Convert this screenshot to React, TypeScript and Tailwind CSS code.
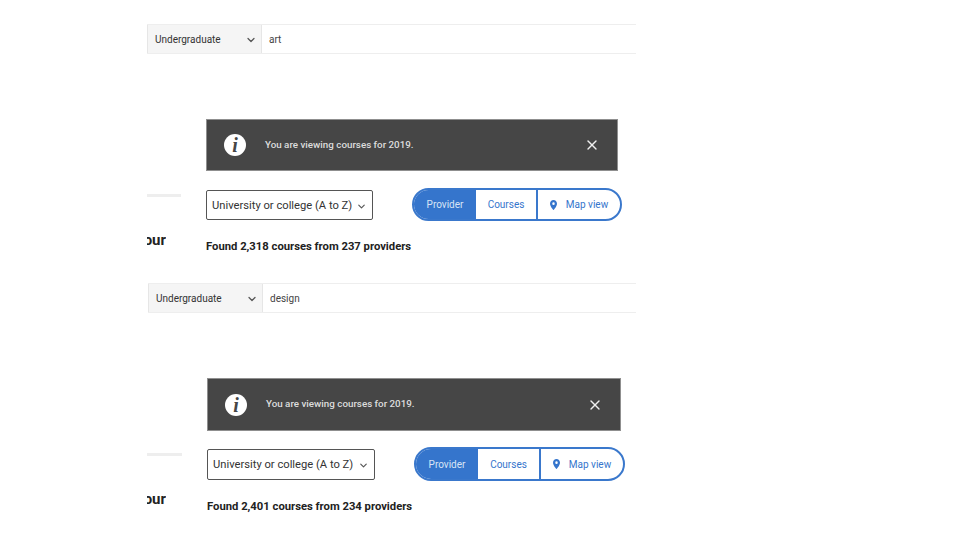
import { ChevronDown, X } from "lucide-react";

type BlockProps = {
  query: string;
  found: string;
  barClass: string;
  selectClass: string;
  noticeClass: string;
  lowerClass: string;
  sideClass: string;
  sortClass: string;
  toggleClass: string;
  providerClass: string;
  coursesClass: string;
  foundClass: string;
  gapClass: string;
};

function Pin() {
  return (
    <svg width="7" height="10" viewBox="0 0 9 12" preserveAspectRatio="none" className="mr-[9px] shrink-0">
      <path
        fillRule="evenodd"
        d="M4.5 0C2 0 0 1.9 0 4.4 0 7.5 4.5 12 4.5 12S9 7.5 9 4.4C9 1.900 7 0 4.500 0Zm0 6A1.600 1.600 0 1 1 4.500 2.800 1.600 1.600 0 0 1 4.500 6Z"
        fill="#3575cc"
      />
    </svg>
  );
}

function Block(p: BlockProps) {
  return (
    <section className="flex flex-col font-['Roboto',sans-serif]">
      <div className={`flex border-y border-[#eeeeee] ${p.barClass}`}>
        <div className={`flex items-center justify-between bg-[#f5f5f5] border-l border-r border-[#e6e6e6] pl-[7px] pr-[4px] pt-[1px] text-[10px] text-[#333333] ${p.selectClass}`}>
          <span>Undergraduate</span>
          <ChevronDown size={12} strokeWidth={2.5} color="#555555" />
        </div>
        <div className="flex items-center pl-[7px] pt-[1px] text-[10px] text-[#444444]">{p.query}</div>
      </div>

      <div className={`flex items-center justify-between bg-[#464646] border border-[#8f8f8f] ${p.noticeClass}`}>
        <div className="flex items-center">
          <span className="flex h-[22px] w-[22px] items-center justify-center rounded-full bg-white font-['Liberation_Serif',serif] text-[20px] font-bold italic text-[#464646]">
            i
          </span>
          <span className="ml-[19px] text-[9.8px] font-medium text-[#dddddd]">You are viewing courses for 2019.</span>
        </div>
        <X size={16} strokeWidth={2} color="#f0f0f0" />
      </div>

      <div className={`flex ${p.lowerClass}`}>
        <div className={`flex shrink-0 flex-col items-start ${p.sideClass}`}>
          <div className="h-[3px] w-full bg-[#eeeeee]" />
          <div className="mt-[36px] flex h-[14px] w-[19px] items-center justify-end overflow-hidden">
            <span className="text-[15px] font-bold leading-none text-[#222222]">Your</span>
          </div>
        </div>
        <div className="flex flex-col">
          <div className={`flex items-center justify-between ${p.gapClass}`}>
            <div className={`flex items-center justify-between whitespace-nowrap rounded-[2px] border border-[#555555] pl-[5px] pr-[5px] pt-[3px] text-[11.2px] text-[#333333] ${p.sortClass}`}>
              <span>University or college (A to Z)</span>
              <ChevronDown size={11} strokeWidth={2.5} color="#555555" />
            </div>
            <div className={`flex overflow-hidden rounded-full border-2 border-[#3a78cc] text-[10px] text-[#3575cc] ${p.toggleClass}`}>
              <span className={`flex items-center justify-center bg-[#3575cc] text-[#d8e4f5] ${p.providerClass}`}>Provider</span>
              <span className={`flex items-center justify-center border-r-2 border-[#3a78cc] ${p.coursesClass}`}>Courses</span>
              <span className="flex flex-1 items-center justify-center">
                <Pin />
                Map view
              </span>
            </div>
          </div>
          <div className={`text-[11.25px] font-bold text-[#222222] ${p.foundClass}`}>{p.found}</div>
        </div>
      </div>
    </section>
  );
}

export default function App() {
  return (
    <main className="flex h-[540px] w-[960px] flex-col overflow-hidden bg-white pl-[147px]">
      <Block
        query="art"
        found="Found 2,318 courses from 237 providers"
        barClass="mt-[24px] h-[30px] w-[489px]"
        selectClass="w-[115px]"
        noticeClass="mt-[65px] ml-[59px] h-[52px] w-[412px] pl-[17px] pr-[17px]"
        lowerClass="mt-[17px]"
        sideClass="w-[59px] pt-[6px] pr-[25px]"
        sortClass="h-[30px] w-[167px]"
        toggleClass="h-[33px] w-[210px]"
        providerClass="w-[62px]"
        coursesClass="w-[62px]"
        foundClass="mt-[19px] leading-[14px]"
        gapClass="w-[416px]"
      />
      <Block
        query="design"
        found="Found 2,401 courses from 234 providers"
        barClass="mt-[29px] ml-[1px] h-[30px] w-[488px]"
        selectClass="w-[115px]"
        noticeClass="mt-[65px] ml-[60px] h-[53px] w-[414px] pl-[17px] pr-[17px]"
        lowerClass="mt-[16px]"
        sideClass="w-[60px] pt-[6px] pr-[25px]"
        sortClass="h-[31px] w-[168px]"
        toggleClass="h-[34px] w-[211px]"
        providerClass="w-[62px]"
        coursesClass="w-[63px]"
        foundClass="mt-[19px] leading-[14px]"
        gapClass="w-[418px]"
      />
    </main>
  );
}
